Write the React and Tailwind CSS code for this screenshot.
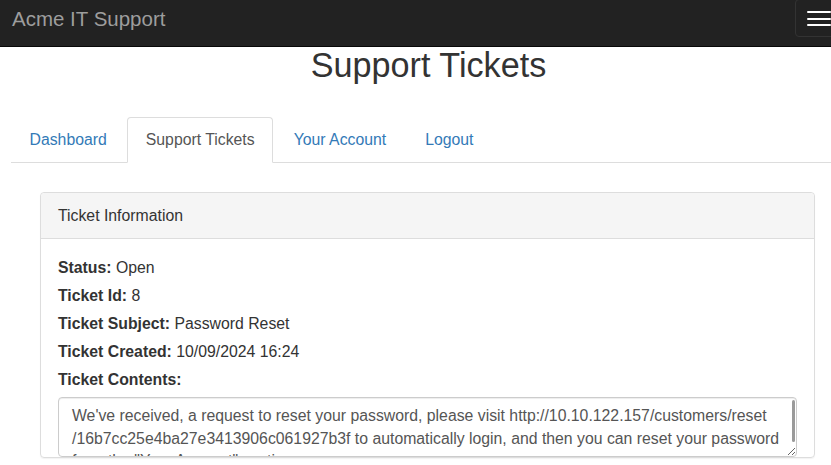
import React from "react";

const ticket = [
  { label: "Status:", value: "Open" },
  { label: "Ticket Id:", value: "8" },
  { label: "Ticket Subject:", value: "Password Reset" },
  { label: "Ticket Created:", value: "10/09/2024 16:24" },
];

// zero-width space lets the long URL wrap at the slash like the original
const contents =
  "We've received, a request to reset your password, please visit http://10.10.122.157/customers/reset\u200B/16b7cc25e4ba27e3413906c061927b3f to automatically login, and then you can reset your password from the \"Your Account\" section";

const tabs = ["Dashboard", "Support Tickets", "Your Account", "Logout"];

export default function App() {
  return (
    <div className="min-h-[465px] overflow-hidden bg-white text-[#333] font-['Liberation_Sans',Arial,sans-serif]">
      {/* Navbar */}
      <nav className="flex h-[47px] items-start justify-between overflow-hidden border-b border-[#080808] bg-[#222]">
        <a className="pl-[12px] pt-[8px] text-[20.5px] leading-[22px] text-[#9d9d9d]">Acme IT Support</a>
        <button className="mr-[-13px] mt-[-1px] flex h-[38px] w-[49px] shrink-0 flex-col gap-[4.4px] rounded-[4px] border border-[#333] px-[11px] pt-[11px]">
          <span className="block h-[2.2px] w-[24px] rounded-[1px] bg-white" />
          <span className="block h-[2.2px] w-[24px] rounded-[1px] bg-white" />
          <span className="block h-[2.2px] w-[24px] rounded-[1px] bg-white" />
        </button>
      </nav>

      {/* Page heading */}
      <h1 className="pl-[26px] text-center text-[34.2px] leading-[37px] font-normal text-[#333]">Support Tickets</h1>

      <div className="pl-[11px]">
        {/* Tabs */}
        <ul className="mt-[33px] flex border-b border-[#ddd] text-[15.8px] leading-[22px]">
          {tabs.map((t) => {
            const active = t === "Support Tickets";
            return (
              <li key={t} className="mb-[-1px] mr-[2px]">
                <a
                  className={
                    active
                      ? "block rounded-t-[4px] border border-[#ddd] border-b-transparent bg-white px-[17.5px] py-[11px] text-[#555]"
                      : "block border border-transparent px-[17.5px] py-[11px] text-[#337ab7]"
                  }
                >
                  {t}
                </a>
              </li>
            );
          })}
        </ul>

        {/* Panel */}
        <div className="ml-[29px] mr-[16px] mt-[29px] rounded-[4px] border border-[#ddd] shadow-[0_1px_1px_rgba(0,0,0,0.05)]">
          <div className="h-[46px] rounded-t-[4px] border-b border-[#ddd] bg-[#f5f5f5] px-[17px] text-[15.8px] leading-[45px] text-[#333]">
            Ticket Information
          </div>
          <div className="px-[17px] pt-[18px] text-[15.8px] leading-[22px]">
            {ticket.map((r) => (
              <div key={r.label} className="mb-[6px]">
                <strong className="font-bold">{r.label}</strong> {r.value}
              </div>
            ))}
            <div className="mb-[6px] font-bold">Ticket Contents:</div>
            <div className="relative">
              <textarea
                readOnly
                value={contents}
                className="block h-[60px] w-full resize-y rounded-[4px] border border-[#ccc] pl-[13px] pr-[6px] pt-[7px] text-[15.8px] leading-[22.5px] text-[#555] shadow-[inset_0_1px_1px_rgba(0,0,0,0.075)] outline-none"
              />
              {/* scrollbar thumb */}
              <span className="pointer-events-none absolute right-[2px] top-[3px] h-[42px] w-[3px] rounded-full bg-[#9a9a9a]" />
            </div>
          </div>
        </div>
      </div>
    </div>
  );
}
